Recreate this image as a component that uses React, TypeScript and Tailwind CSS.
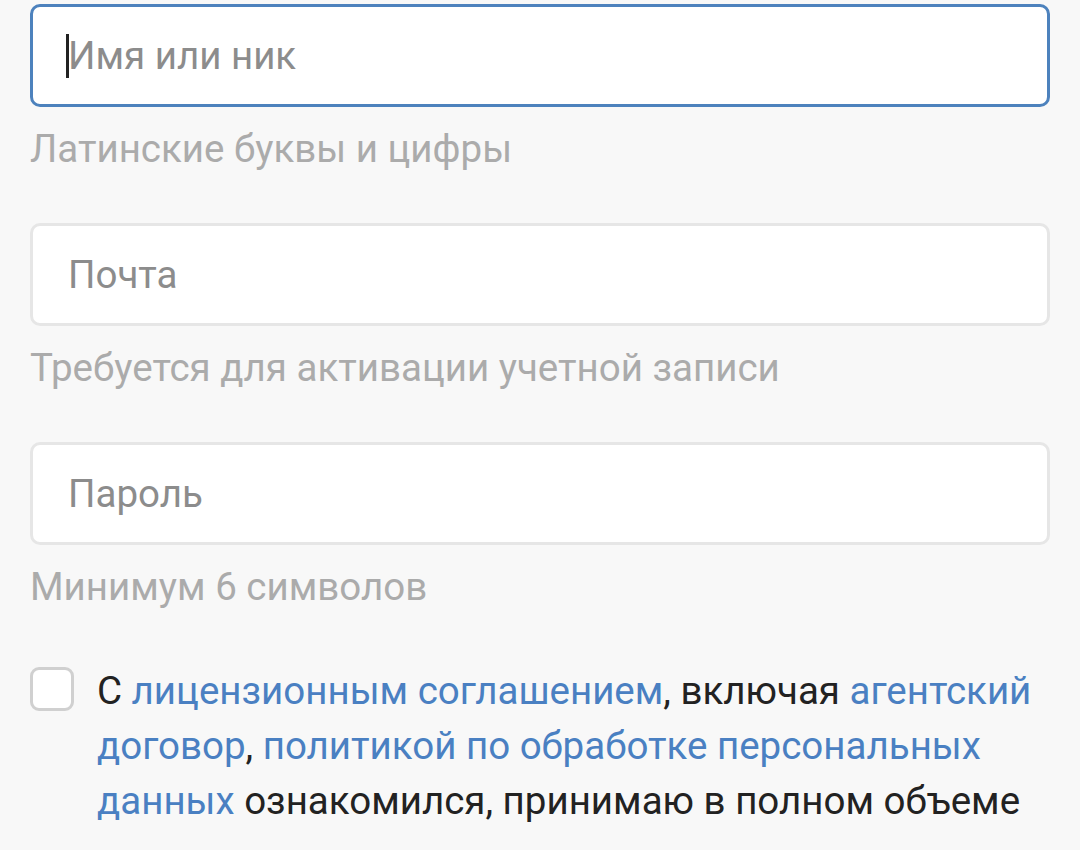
import React, { useState } from 'react';

const FIELDS = [
  { id: 'login',    placeholder: 'Имя или ник', hint: 'Латинские буквы и цифры',               type: 'text'     },
  { id: 'email',    placeholder: 'Почта',       hint: 'Требуется для активации учетной записи', type: 'email'    },
  { id: 'password', placeholder: 'Пароль',      hint: 'Минимум 6 символов',                     type: 'password' },
];

export default function App() {
  const [agree, setAgree] = useState(false);

  return (
    <div
      className="min-h-[850px] bg-[#f8f8f8] px-[30px] pt-[4px] overflow-hidden"
      style={{ fontFamily: 'Roboto, "Noto Sans", sans-serif' }}
    >
      {FIELDS.map((f, i) => (
        <div key={f.id} className="mb-[50px]">
          <div className="relative">
            <input
              type={f.type}
              placeholder={f.placeholder}
              className={`block w-full h-[103px] rounded-[10px] border-[3px] bg-white pl-[35px] pr-[34px] text-[38.5px] text-[#222] placeholder:text-[#8c8c8c] outline-none ${
                i === 0 ? 'border-[#4d82bd]' : 'border-[#e6e6e6]'
              }`}
            />
            {/* text caret of the focused field */}
            {i === 0 && <span className="absolute left-[36px] top-[30px] w-[3px] h-[44px] bg-[#222]" />}
          </div>
          <div className="mt-[18px] text-[38.5px] leading-[48px] text-[#ababab]">{f.hint}</div>
        </div>
      ))}

      <div className="flex items-start gap-[23px] mt-[10px]">
        <button
          onClick={() => setAgree(!agree)}
          className="mt-[6px] shrink-0 w-[44px] h-[44px] rounded-[9px] border-[3px] border-[#d0d0d0] bg-white"
        />
        <p className="mt-[2px] text-[38.5px] leading-[55px] text-[#222]">
          С <a className="text-[#4a80c2]">лицензионным соглашением</a>, включая{' '}
          <a className="text-[#4a80c2]">агентский договор</a>,{' '}
          <a className="text-[#4a80c2]">политикой по обработке персональных данных</a>{' '}
          ознакомился, принимаю в полном объеме
        </p>
      </div>
    </div>
  );
}
